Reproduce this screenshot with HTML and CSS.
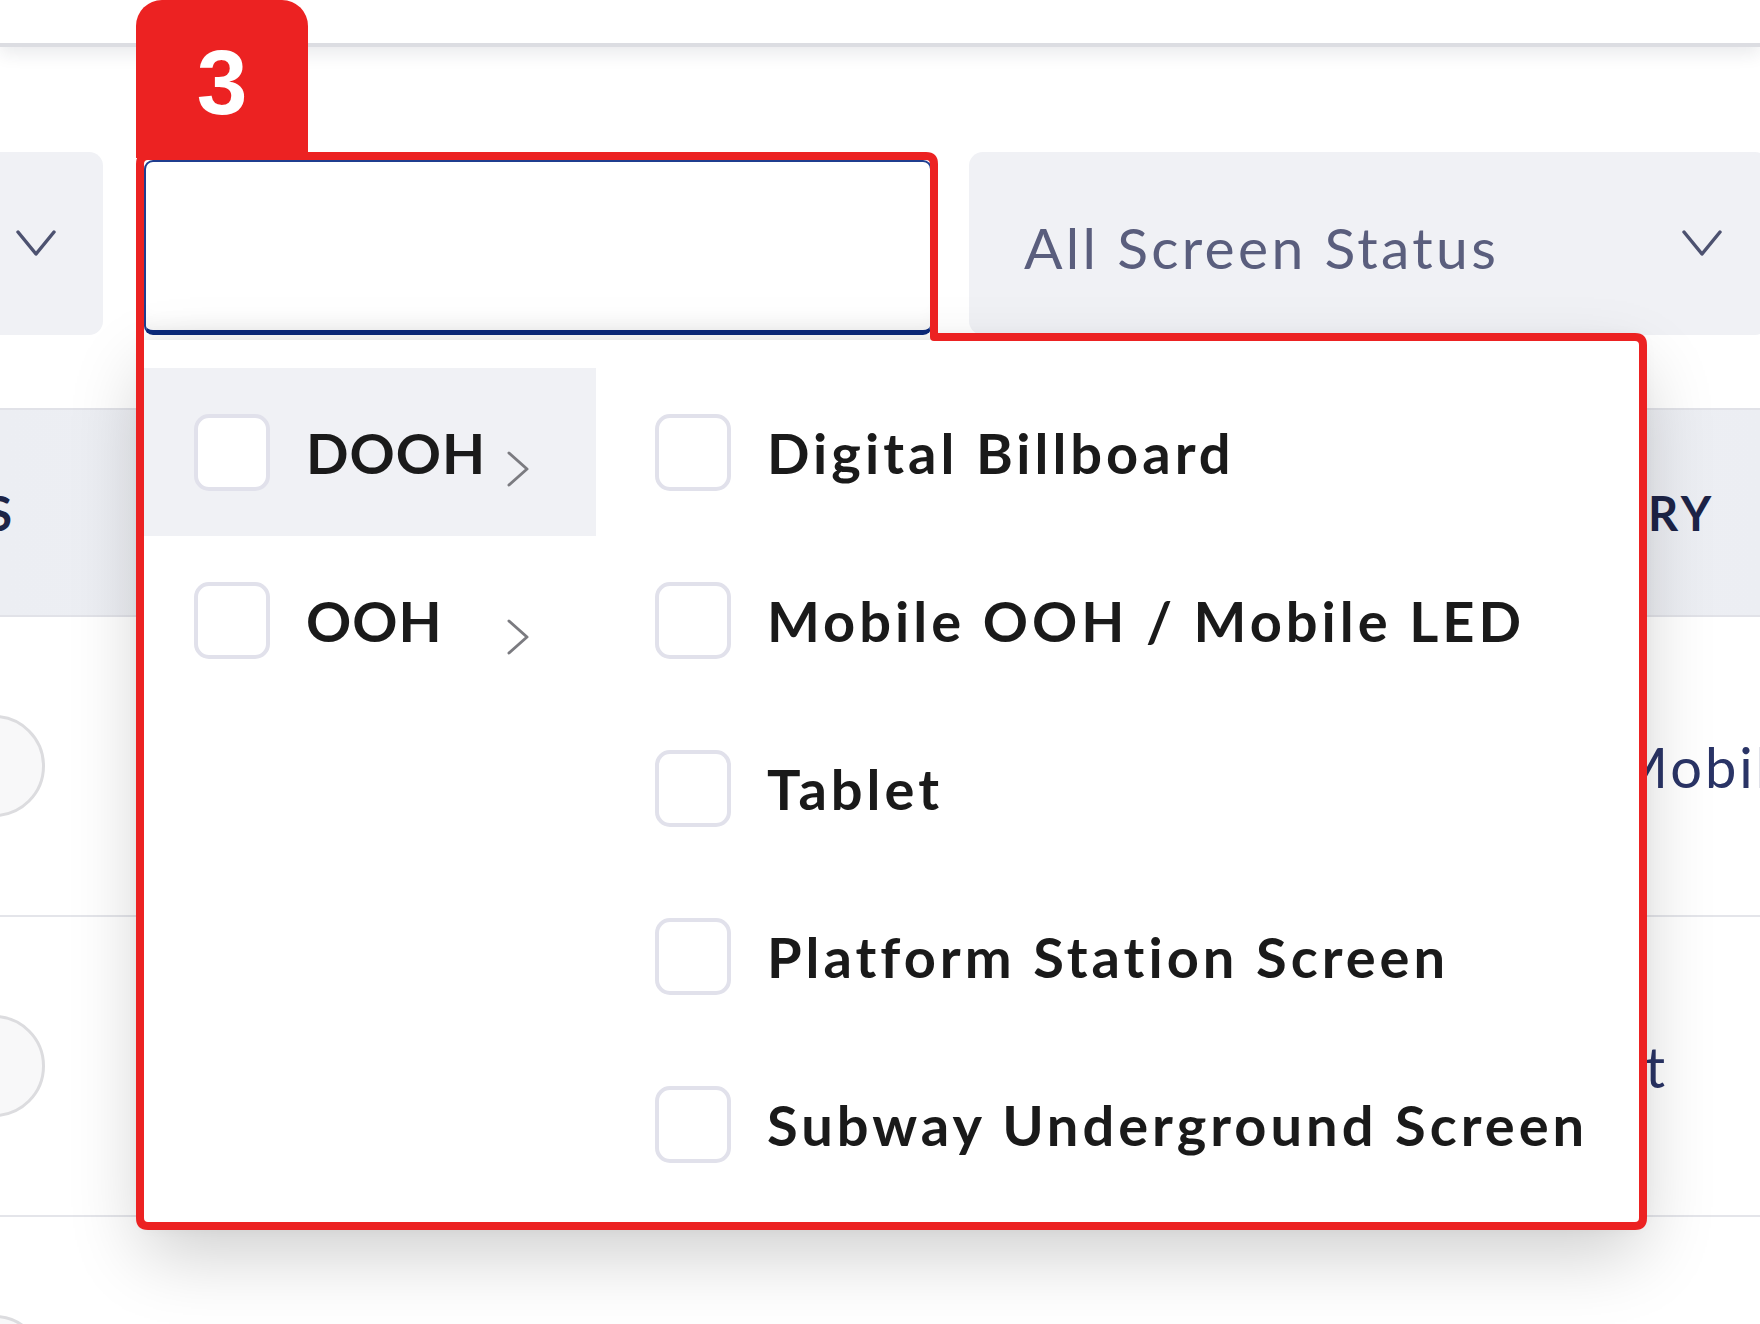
FILE: index.html
```html
<!DOCTYPE html>
<html lang="en">
<head>
<meta charset="utf-8">
<title>Screen type filter</title>
<link rel="stylesheet" href="styles.css">
</head>
<body>
<div class="page">
  <header class="topbar"></header>

  <div class="filters">
    <div class="select select-left">
      <span class="select-label">All Types</span>
      <svg class="chev-down" viewBox="0 0 42 30"><path d="M3 4 L21 26 L39 4"/></svg>
    </div>
    <div class="search-input"></div>
    <div class="select select-status">
      <span class="select-label">All Screen Status</span>
      <svg class="chev-down" viewBox="0 0 42 30"><path d="M3 4 L21 26 L39 4"/></svg>
    </div>
  </div>

  <div class="table">
    <div class="trow thead">
      <div class="cell c-first"><span class="head-text">STATUS</span></div>
      <div class="cell c-last"><span class="head-text">CATEGO<span class="head-tail">RY</span></span></div>
    </div>
    <div class="trow tbody">
      <div class="cell c-first"><span class="circle"></span></div>
      <div class="cell c-last"><span class="body-text">Mobile OOH</span></div>
    </div>
    <div class="trow tbody">
      <div class="cell c-first"><span class="circle"></span></div>
      <div class="cell c-last c-end"><span class="body-text">Tablet</span></div>
    </div>
    <div class="trow tbody">
      <div class="cell c-first"><span class="circle"></span></div>
      <div class="cell c-last"></div>
    </div>
  </div>

  <div class="dropdown">
    <div class="col col-parents">
      <div class="opt opt-parent active">
        <span class="box"></span>
        <span class="opt-label">DOOH</span>
        <svg class="chev-right" viewBox="0 0 26 38"><path d="M4 3 L22 19 L4 35"/></svg>
      </div>
      <div class="opt opt-parent">
        <span class="box"></span>
        <span class="opt-label">OOH</span>
        <svg class="chev-right" viewBox="0 0 26 38"><path d="M4 3 L22 19 L4 35"/></svg>
      </div>
    </div>
    <div class="col col-children">
      <div class="opt"><span class="box"></span><span class="opt-label">Digital Billboard</span></div>
      <div class="opt"><span class="box"></span><span class="opt-label">Mobile OOH / Mobile LED</span></div>
      <div class="opt"><span class="box"></span><span class="opt-label">Tablet</span></div>
      <div class="opt"><span class="box"></span><span class="opt-label">Platform Station Screen</span></div>
      <div class="opt"><span class="box"></span><span class="opt-label">Subway Underground Screen</span></div>
    </div>
  </div>

  <svg class="annot-outline" viewBox="0 0 1760 1324">
    <path d="M140 1218 L140 164 Q140 156 148 156 L926 156 Q934 156 934 164 L934 337 L1635 337 Q1643 337 1643 345 L1643 1218 Q1643 1226 1635 1226 L148 1226 Q140 1226 140 1218 Z"/>
  </svg>
  <div class="annot-badge">3</div>
</div>
</body>
</html>
```

FILE: styles.css
```css
html, body {
  margin: 0;
  padding: 0;
  background: #ffffff;
}
body {
  width: 1760px;
  height: 1324px;
  overflow: hidden;
  font-family: Lato, "Noto Sans", sans-serif;
}
.page {
  position: relative;
  width: 1760px;
  height: 1324px;
  overflow: hidden;
}

/* top bar */
.topbar {
  height: 43px;
  background: #fff;
  border-bottom: 4px solid #dcdde2;
  box-shadow: 0 6px 18px rgba(30, 35, 60, 0.1);
}

/* filter row */
.filters {
  display: flex;
  align-items: flex-end;
  margin-top: 105px;
  height: 183px;
}
.select {
  box-sizing: border-box;
  height: 183px;
  background: #f0f1f5;
  border-radius: 14px;
  display: flex;
  align-items: center;
  justify-content: space-between;
  flex: none;
}
.select-left {
  width: 400px;
  margin-left: -297px;
  padding: 0 46px 0 55px;
}
.select-left .select-label { visibility: hidden; }
.select-status {
  width: 800px;
  margin-left: 37px;
  padding: 0 46px 0 55px;
}
.select-label {
  font-family: Lato, sans-serif;
  font-size: 57px;
  font-weight: 400;
  color: #5a5e7d;
  letter-spacing: 3.3px;
  margin-top: 6px;
}
.chev-down {
  width: 42px;
  height: 30px;
  margin-top: -2px;
}
.chev-down path {
  fill: none;
  stroke: #4d5270;
  stroke-width: 3.5;
  stroke-linecap: round;
  stroke-linejoin: round;
}
.search-input {
  box-sizing: border-box;
  flex: none;
  width: 788px;
  height: 175px;
  margin-left: 41px;
  background: #fff;
  border: 2px solid #1f3d8f;
  border-bottom: 5px solid #0c2a7c;
  border-radius: 9px;
  box-shadow: inset 0 -18px 18px -12px rgba(0, 0, 0, 0.05);
}

/* table behind */
.table {
  margin-top: 73px;
}
.trow {
  display: flex;
  justify-content: space-between;
  align-items: center;
  box-sizing: border-box;
}
.thead {
  height: 209px;
  background: linear-gradient(90deg, #eceef3, #f1f2f6 60%, #eceef3);
  border-top: 2px solid #e1e2e8;
  border-bottom: 2px solid #e1e2e8;
}
.tbody {
  height: 300px;
  border-bottom: 2px solid #e4e5ea;
}
.cell {
  display: flex;
  align-items: center;
}
.c-first {
  width: 200px;
  margin-left: -190px;
  justify-content: flex-end;
}
.c-first .head-text {
  margin-right: -6px;
}
.c-last {
  width: 124px;
}
.c-end {
  justify-content: flex-end;
  width: 100px;
  margin-right: 92px;
}
.head-text {
  font-family: Lato, sans-serif;
  font-weight: 700;
  font-size: 47px;
  color: #1d2447;
  letter-spacing: 4px;
  white-space: nowrap;
}
.head-tail {
  margin-left: 8px;
}
.thead .c-last .head-text {
  margin-left: -207px;
}
.tbody .c-last .body-text {
  margin-left: -20px;
}
.tbody .c-end .body-text {
  margin-left: 0;
}
.body-text {
  font-family: Lato, sans-serif;
  font-size: 56px;
  font-weight: 400;
  color: #2a3466;
  letter-spacing: 3px;
  white-space: nowrap;
}
.circle {
  box-sizing: border-box;
  width: 102px;
  height: 102px;
  border-radius: 50%;
  border: 3px solid #dcdcdf;
  background: #f8f8f9;
  margin-right: -35px;
}

/* dropdown menu */
.dropdown {
  position: absolute;
  left: 144px;
  top: 340px;
  width: 1496px;
  height: 883px;
  box-sizing: border-box;
  padding-top: 28px;
  background: #fff;
  display: flex;
  align-items: flex-start;
  box-shadow: 0 30px 70px rgba(0, 0, 0, 0.2), 0 0 16px rgba(0, 0, 0, 0.08);
}
.col {
  display: flex;
  flex-direction: column;
}
.col-parents {
  width: 452px;
  flex: none;
}
.col-children {
  flex: 1;
  padding-left: 59px;
}
.opt {
  height: 168px;
  display: flex;
  align-items: center;
}
.opt-parent {
  padding-left: 50px;
  padding-right: 65px;
}
.opt-parent.active {
  background: #f0f1f5;
}
.box {
  box-sizing: border-box;
  width: 76px;
  height: 77px;
  flex: none;
  border: 4px solid #e1e1eb;
  border-radius: 15px;
  background: #fff;
}
.opt-label {
  font-family: Lato, sans-serif;
  font-weight: 700;
  font-size: 56px;
  color: #1a1a1a;
  margin-left: 36px;
  white-space: nowrap;
  letter-spacing: 4px;
}
.col-parents .opt-label {
  margin-left: 36px;
  flex: 1;
  letter-spacing: 1px;
}
.chev-right {
  width: 26px;
  height: 38px;
  margin-top: 34px;
  flex: none;
}
.chev-right path {
  fill: none;
  stroke: #7b7b80;
  stroke-width: 3;
  stroke-linecap: round;
  stroke-linejoin: round;
}

/* annotation */
.annot-outline {
  position: absolute;
  left: 0;
  top: 0;
  width: 1760px;
  height: 1324px;
  pointer-events: none;
}
.annot-outline path {
  fill: none;
  stroke: #ec2222;
  stroke-width: 8;
  stroke-linejoin: round;
}
.annot-badge {
  position: absolute;
  left: 136px;
  top: 0;
  width: 172px;
  height: 158px;
  background: #ec2222;
  border-radius: 26px 26px 0 0;
  color: #fff;
  font-family: "Liberation Sans", Arial, sans-serif;
  font-weight: 700;
  font-size: 91px;
  line-height: 1;
  text-align: center;
  padding-top: 37px;
  box-sizing: border-box;
}
```
